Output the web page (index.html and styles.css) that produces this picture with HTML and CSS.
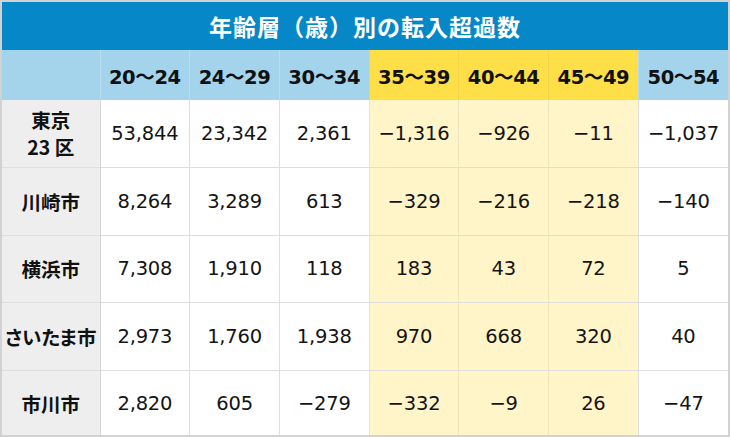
FILE: index.html
```html
<!DOCTYPE html>
<html lang="ja">
<head>
<meta charset="utf-8">
<link rel="stylesheet" href="styles.css">
</head>
<body>
<div class="frame">
  <div class="title">年齢層（歳）別の転入超過数</div>
  <table class="grid">
    <colgroup>
      <col class="c-label">
      <col><col><col><col><col><col><col>
    </colgroup>
    <thead>
      <tr>
        <th class="corner"></th>
        <th>20～24</th>
        <th>24～29</th>
        <th>30～34</th>
        <th class="hl">35～39</th>
        <th class="hl">40～44</th>
        <th class="hl">45～49</th>
        <th>50～54</th>
      </tr>
    </thead>
    <tbody>
      <tr>
        <th class="rl">東京<br>23 区</th>
        <td>53,844</td><td>23,342</td><td>2,361</td>
        <td class="hl">−1,316</td><td class="hl">−926</td><td class="hl">−11</td>
        <td>−1,037</td>
      </tr>
      <tr>
        <th class="rl">川崎市</th>
        <td>8,264</td><td>3,289</td><td>613</td>
        <td class="hl">−329</td><td class="hl">−216</td><td class="hl">−218</td>
        <td>−140</td>
      </tr>
      <tr>
        <th class="rl">横浜市</th>
        <td>7,308</td><td>1,910</td><td>118</td>
        <td class="hl">183</td><td class="hl">43</td><td class="hl">72</td>
        <td>5</td>
      </tr>
      <tr>
        <th class="rl">さいたま市</th>
        <td>2,973</td><td>1,760</td><td>1,938</td>
        <td class="hl">970</td><td class="hl">668</td><td class="hl">320</td>
        <td>40</td>
      </tr>
      <tr class="last">
        <th class="rl">市川市</th>
        <td>2,820</td><td>605</td><td>−279</td>
        <td class="hl">−332</td><td class="hl">−9</td><td class="hl">26</td>
        <td>−47</td>
      </tr>
    </tbody>
  </table>
</div>
</body>
</html>
```

FILE: styles.css
```css
html, body {
  margin: 0;
  padding: 0;
  background: #ffffff;
}

.frame {
  width: 730px;
  height: 437px;
  box-sizing: border-box;
  border: 2px solid #d2d2d2;
  display: flex;
  flex-direction: column;
  font-family: "DejaVu Sans", "Noto Sans CJK JP", sans-serif;
  color: #141414;
}

.title {
  height: 48px;
  flex: none;
  background: #0687c7;
  color: #ffffff;
  font-family: "Noto Sans CJK JP", sans-serif;
  font-weight: 700;
  font-size: 23px;
  letter-spacing: 1px;
  display: flex;
  align-items: center;
  justify-content: center;
}

.grid {
  width: 726px;
  flex: 1;
  border-collapse: collapse;
  table-layout: fixed;
}

.c-label {
  width: 98px;
}

.grid thead th {
  height: 50px;
  padding: 0;
  background: #a4d4ec;
  font-family: "DejaVu Sans", "Noto Sans CJK JP", sans-serif;
  font-weight: 700;
  font-size: 19.5px;
  color: #111111;
  border-left: 1px solid #b9dcee;
  letter-spacing: -0.4px;
}

.grid thead th.corner {
  border-left: none;
}

.grid thead th.hl {
  background: #ffdf48;
  border-left: 1px solid #f4d44a;
}

.grid tbody th,
.grid tbody td {
  height: 66px;
  padding: 0;
  text-align: center;
  border-top: 1px solid #dedede;
  border-left: 1px solid #dedede;
}

.grid tbody tr:first-child th,
.grid tbody tr:first-child td {
  border-top: none;
}

.grid tbody tr.last th,
.grid tbody tr.last td {
  height: 63px;
}

.grid tbody td {
  font-size: 19.5px;
  font-weight: 400;
  background: #ffffff;
  letter-spacing: -0.2px;
}

.grid tbody td.hl {
  background: #fff5c9;
  border-left-color: #ece4bf;
}

.grid tbody th.rl {
  background: #eeeeee;
  border-left: none;
  border-right: 1px solid #d6d6d6;
  font-family: "Noto Sans CJK JP", sans-serif;
  font-weight: 700;
  font-size: 19.5px;
  line-height: 27px;
  font-feature-settings: "palt";
  color: #111111;
}
```
